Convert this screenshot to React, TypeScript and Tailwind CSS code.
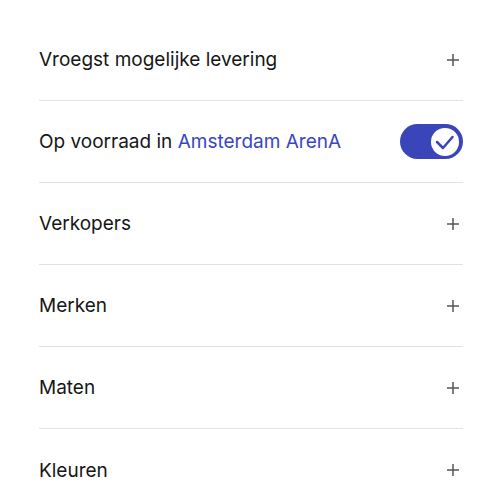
import { useState } from "react";

const rows = ["Verkopers", "Merken", "Maten", "Kleuren"];

function Plus() {
  return (
    <svg width="14" height="14" viewBox="0 0 14 14" className="text-[#555]">
      <path d="M7 1v12M1 7h12" stroke="currentColor" strokeWidth="1.5" />
    </svg>
  );
}

export default function App() {
  const [inStock, setInStock] = useState(true);

  return (
    <div className="bg-white w-[480px] h-[502px] overflow-hidden pl-[39px] pr-[17px] pt-[19px] text-[#161616] [font-family:Inter,'Noto_Sans',sans-serif]">
      <div className="flex items-center justify-between h-[82px] border-b border-[#e2e2e2]">
        <span className="text-[19px] pt-[2px]">Vroegst mogelijke levering</span>
        <span className="mr-[3px]"><Plus /></span>
      </div>

      <div className="flex items-center justify-between h-[82px] border-b border-[#e2e2e2]">
        <span className="text-[19px] pt-[2px]">
          Op voorraad in <span className="text-[#3a45c2]">Amsterdam ArenA</span>
        </span>
        <button
          onClick={() => setInStock(!inStock)}
          className="w-[63px] h-[35px] rounded-full bg-[#3a45b9] flex items-center justify-end px-[4px]"
        >
          <span className="w-[28px] h-[28px] rounded-full bg-white flex items-center justify-center">
            <svg width="28" height="28" viewBox="0 0 28 28">
              <path d="M6 14l6 6L21.5 9" fill="none" stroke="#3a45b9" strokeWidth="2.5" strokeLinecap="round" strokeLinejoin="round" />
            </svg>
          </span>
        </button>
      </div>

      {rows.map((r, i) => (
        <div
          key={r}
          className={`flex items-center justify-between h-[82px] ${i < rows.length - 1 ? "border-b border-[#e2e2e2]" : ""}`}
        >
          <span className="text-[19px] pt-[2px]">{r}</span>
          <span className="mr-[3px]"><Plus /></span>
        </div>
      ))}
    </div>
  );
}
